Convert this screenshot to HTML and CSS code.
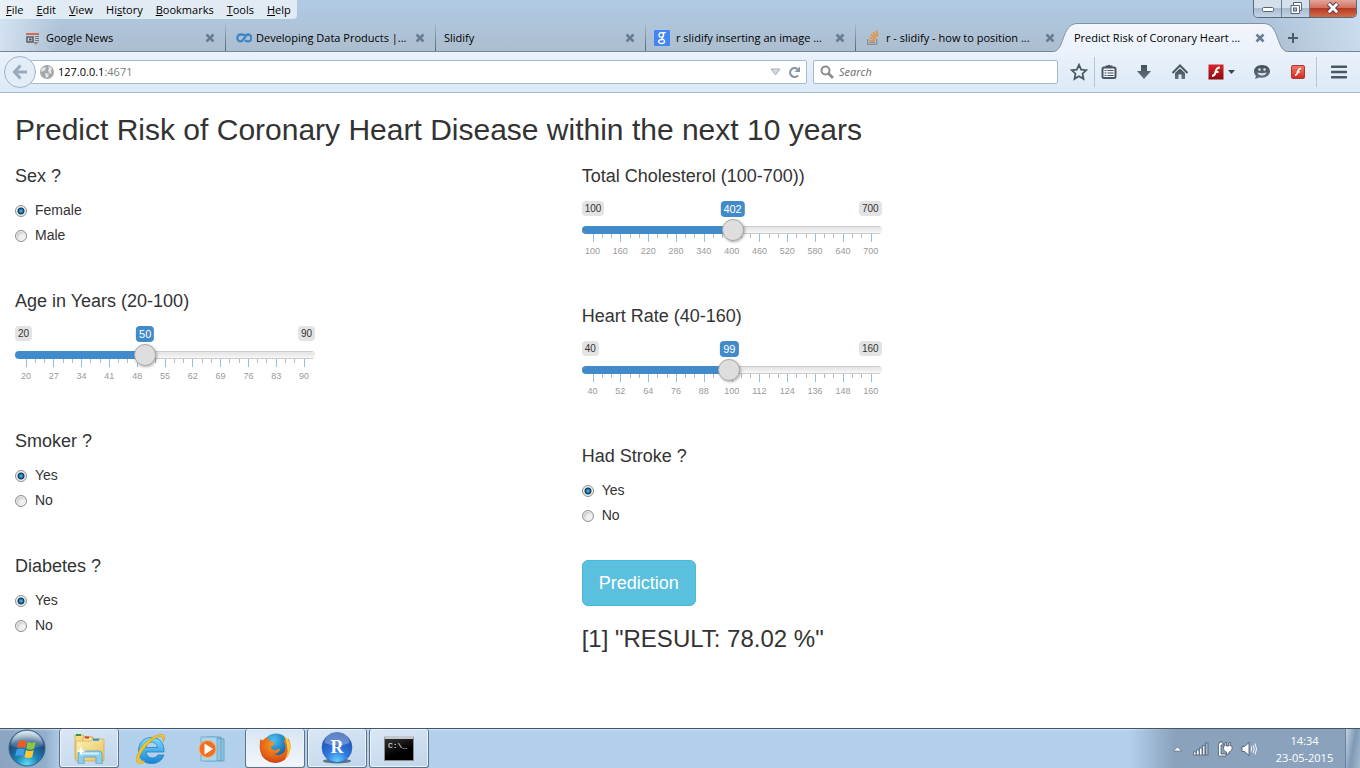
FILE: index.html
```
<!DOCTYPE html>
<html lang="en">
<head>
<meta charset="utf-8">
<meta name="viewport" content="width=device-width, initial-scale=1">
<title>Predict Risk of Coronary Heart Disease</title>
<link rel="stylesheet" href="styles.css">
</head>
<body>
<svg class="defs" aria-hidden="true">
  <defs>
    <symbol id="x" viewBox="0 0 10 10"><path d="M1.5 1.5l7 7M8.5 1.5l-7 7" stroke="#687d92" stroke-width="2.6"/></symbol>
    <symbol id="ticks" viewBox="0 0 278 8" preserveAspectRatio="none" overflow="visible">
      <path d="M9.3 0v4M18.5 0v4M37.1 0v4M46.3 0v4M64.9 0v4M74.1 0v4M92.7 0v4M101.9 0v4M120.5 0v4M129.7 0v4M148.3 0v4M157.5 0v4M176.1 0v4M185.3 0v4M203.9 0v4M213.1 0v4M231.7 0v4M240.9 0v4M259.5 0v4M268.7 0v4" stroke="#b8b8b8"/>
      <path d="M0 0v8M27.8 0v8M55.6 0v8M83.4 0v8M111.2 0v8M139 0v8M166.8 0v8M194.6 0v8M222.4 0v8M250.2 0v8M278 0v8" stroke="#93bfe2"/>
    </symbol>
    <linearGradient id="tabfill" x1="0" y1="0" x2="0" y2="1"><stop offset="0" stop-color="#f3f6fb"/><stop offset="1" stop-color="#eaf2fb"/></linearGradient>
    <linearGradient id="dark" x1="0" y1="0" x2="0" y2="1"><stop offset="0" stop-color="#434e5a"/><stop offset="1" stop-color="#66737f"/></linearGradient>
    <linearGradient id="red" x1="0" y1="0" x2="0" y2="1"><stop offset="0" stop-color="#d8262a"/><stop offset="1" stop-color="#8c0a0d"/></linearGradient>
    <linearGradient id="red2" x1="0" y1="0" x2="0" y2="1"><stop offset="0" stop-color="#f47a6b"/><stop offset="1" stop-color="#cf2a20"/></linearGradient>
    <radialGradient id="orb" cx=".5" cy=".95" r=".9"><stop offset="0" stop-color="#59e0f5"/><stop offset=".35" stop-color="#1d82b8"/><stop offset=".75" stop-color="#1a4a78"/><stop offset="1" stop-color="#8fb4cf"/></radialGradient>
    <linearGradient id="gloss" x1="0" y1="0" x2="0" y2="1"><stop offset="0" stop-color="#fff" stop-opacity=".7"/><stop offset="1" stop-color="#fff" stop-opacity=".08"/></linearGradient>
    <linearGradient id="folder" x1="0" y1="0" x2="1" y2="1"><stop offset="0" stop-color="#fdf3b4"/><stop offset="1" stop-color="#e6bf5c"/></linearGradient>
    <linearGradient id="ieblue" x1="0" y1="0" x2="0" y2="1"><stop offset="0" stop-color="#7fdcfb"/><stop offset="1" stop-color="#1584d4"/></linearGradient>
    <radialGradient id="fox" cx=".5" cy=".3" r=".75"><stop offset="0" stop-color="#f9a01b"/><stop offset=".6" stop-color="#e8641a"/><stop offset="1" stop-color="#c23b17"/></radialGradient>
    <radialGradient id="globe" cx=".4" cy=".25" r=".8"><stop offset="0" stop-color="#4fc3f3"/><stop offset=".6" stop-color="#1879bd"/><stop offset="1" stop-color="#123f7c"/></radialGradient>
    <radialGradient id="rball" cx=".5" cy=".95" r=".95"><stop offset="0" stop-color="#62d0ff"/><stop offset=".4" stop-color="#2e78dd"/><stop offset="1" stop-color="#1c47ab"/></radialGradient>
  </defs>
</svg>

<header class="browser">
  <div class="titlebar">
    <nav class="menubar" aria-label="Menu bar">
      <button><u>F</u>ile</button><button><u>E</u>dit</button><button><u>V</u>iew</button><button>Hi<u>s</u>tory</button><button><u>B</u>ookmarks</button><button><u>T</u>ools</button><button><u>H</u>elp</button>
    </nav>
    <div class="window-buttons">
      <button class="win-min" aria-label="Minimize"><svg width="14" height="16" viewBox="0 0 14 16"><rect x="1.5" y="6.5" width="11" height="4" rx="1" fill="#fff" stroke="#5a6575"/></svg></button>
      <button class="win-max" aria-label="Restore"><svg width="14" height="16" viewBox="0 0 14 16"><path d="M4.500 2.500h8v8h-2v3h-8.500v-8h2.500z" fill="#fff" stroke="#5a6575"/><path d="M4.500 5.500h6v5" fill="none" stroke="#5a6575"/><rect x="4.500" y="8" width="3" height="3" fill="#a6b8cc" stroke="#5a6575"/></svg></button>
      <button class="win-close" aria-label="Close"><svg width="16" height="16" viewBox="0 0 16 16"><path d="M3.500 3.500l9 9M12.500 3.500l-9 9" stroke="#5c3b40" stroke-width="4.600"/><path d="M3.800 3.800l8.400 8.400M12.200 3.800l-8.400 8.400" stroke="#fff" stroke-width="2.800"/></svg></button>
    </div>
  </div>

  <div class="tabs">
    <div class="tab">
      <svg width="16" height="16" viewBox="0 0 16 16"><path d="M0 4h13" stroke="#e0442c" stroke-width="1.500"/><rect x="1" y="7" width="6" height="5" fill="none" stroke="#555" stroke-width="1.400"/><rect x="3" y="8.500" width="2.500" height="2" fill="#555"/><path d="M9 6.500h4M9 8.500h4M9 10.500h4" stroke="#777"/><path d="M8 12h5l-4 3z" fill="#888"/></svg>
      <span class="tab-title">Google News</span><button class="tab-close" aria-label="Close tab"><svg width="10" height="10"><use href="#x"/></svg></button>
    </div>
    <div class="tab">
      <svg width="16" height="16" viewBox="0 0 16 16"><path d="M9.500 5.700C8 4.200 6.500 4.500 4.700 4.500a3.400 3.400 0 0 0 0 6.900c3.500 0 4-6.900 7.300-6.900a3.300 3.300 0 0 1 0 6.900c-1.200 0-2.200-.400-2.900-1.200" fill="none" stroke="#3f86c8" stroke-width="2.300"/></svg>
      <span class="tab-title">Developing Data Products |...</span><button class="tab-close" aria-label="Close tab"><svg width="10" height="10"><use href="#x"/></svg></button>
    </div>
    <div class="tab tab-plain">
      <span class="tab-title">Slidify</span><button class="tab-close" aria-label="Close tab"><svg width="10" height="10"><use href="#x"/></svg></button>
    </div>
    <div class="tab tab-google">
      <svg width="16" height="16" viewBox="0 0 16 16"><rect width="16" height="16" rx="1" fill="#4285f4"/><g fill="none" stroke="#fff" stroke-width="1.300"><ellipse cx="7.300" cy="4.900" rx="2.300" ry="2.300"/><path d="M7.300 2.600h4.500M9.300 3.500q1 2-.300 3.300-2 1.200-.4 2.100c1 .600 2 1.200 2 2.300 0 3-6 3-6 .400 0-1.600 2-2.100 4-2.100"/></g></svg>
      <span class="tab-title">r slidify inserting an image ...</span><button class="tab-close" aria-label="Close tab"><svg width="10" height="10"><use href="#x"/></svg></button>
    </div>
    <div class="tab">
      <svg width="16" height="16" viewBox="0 0 16 16"><path d="M1.700 9v5.300h9V9" fill="none" stroke="#8b8f94" stroke-width="1.300"/><path d="M3.500 12.400h5.500" stroke="#8b8f94" stroke-width="1.300"/><g stroke="#f08a24" stroke-width="1.400"><path d="M3.500 10.400l5.600.500M3.700 7.700l5.600 1.600M4.700 4.700l5 3.200M7 2.200l3.700 4.600M10.300.500l1.600 5.600"/></g></svg>
      <span class="tab-title">r - slidify - how to position ...</span><button class="tab-close" aria-label="Close tab"><svg width="10" height="10"><use href="#x"/></svg></button>
    </div>
    <div class="tab tab-active">
      <div class="tab-shape" aria-hidden="true">
        <svg width="26" height="30" viewBox="0 0 26 30"><path d="M0 28.500C12 28.500 8 1 24 .500h2V30H0z" fill="url(#tabfill)"/><path d="M0 28.500C12 28.500 8 1 24 .500h2" fill="none" stroke="#7d92a9"/></svg>
        <i></i>
        <svg width="26" height="30" viewBox="0 0 26 30"><path d="M26 28.500C14 28.500 18 1 2 .500H0V30h26z" fill="url(#tabfill)"/><path d="M26 28.500C14 28.500 18 1 2 .500H0" fill="none" stroke="#7d92a9"/></svg>
      </div>
      <span class="tab-title">Predict Risk of Coronary Heart ...</span><button class="tab-close" aria-label="Close tab"><svg width="10" height="10"><use href="#x"/></svg></button>
    </div>
    <button class="new-tab" aria-label="New tab"><svg width="12" height="12" viewBox="0 0 12 12"><path d="M6 1v10M1 6h10" stroke="#4a5b6d" stroke-width="2"/></svg></button>
  </div>

  <div class="toolbar">
    <button class="back" aria-label="Back"><svg width="16" height="16" viewBox="0 0 16 16"><path d="M8.500 1.500L2.500 8l6 6.500M3 8h12" fill="none" stroke="#9aaabc" stroke-width="3"/></svg></button>
    <div class="urlbar">
      <svg width="16" height="16" viewBox="0 0 16 16"><circle cx="8" cy="8" r="7" fill="#a3a7aa"/><path d="M3 4l3-1 1 2-2 2-3 1zM9 2l4 2-1 4 1 2-3-1-1-3 1-2zM6 9l4 1-1 3-2 1z" fill="#e4e6e7"/></svg>
      <div class="address"><span>127.0.0.1</span><span class="port">:4671</span></div>
      <button aria-label="Show history"><svg width="11" height="8" viewBox="0 0 11 8"><path d="M1 1h9L5.500 7z" fill="#d5dbe2" stroke="#a5afbb"/></svg></button>
      <button aria-label="Reload"><svg width="13" height="13" viewBox="0 0 13 13"><path d="M10 9.500A4.500 4.500 0 1 1 9.500 3" fill="none" stroke="#8695a5" stroke-width="2.200"/><path d="M12 .500V6H6.500z" fill="#8695a5"/></svg></button>
    </div>
    <label class="search">
      <svg width="14" height="14" viewBox="0 0 14 14"><circle cx="5.500" cy="5.500" r="4" fill="none" stroke="#8d8d8d" stroke-width="2"/><path d="M8.500 8.500l4.500 4.500" stroke="#8d8d8d" stroke-width="2.600"/></svg>
      <input type="text" placeholder="Search" aria-label="Search">
    </label>
    <div class="tools">
      <button class="t-star" aria-label="Bookmark"><svg width="18" height="18" viewBox="0 0 18 18"><path d="M9 1.800l2.200 4.800 5 .600-3.700 3.500 1 5.200L9 13.300l-4.500 2.600 1-5.200L1.800 7.200l5-.600z" fill="none" stroke="#4b5763" stroke-width="1.800"/></svg></button>
      <button class="t-clip" aria-label="Bookmarks list"><svg width="16" height="16" viewBox="0 0 16 16"><path d="M4.500 3V1.500h2Q8 0 9.500 1.500h2V3z" fill="#4b5763"/><rect x="1.500" y="3.500" width="13" height="10.500" rx="1.500" fill="#eef3f9" stroke="#4b5763" stroke-width="2"/><path d="M3.500 6.500h2M6.500 6.500h6M3.500 9h2M6.500 9h6M3.500 11.500h2M6.500 11.500h6" stroke="#4b5763" stroke-width="1.200"/></svg></button>
      <button aria-label="Downloads"><svg width="16" height="16" viewBox="0 0 16 16"><path d="M5 1h6v6h4l-7 8-7-8h4z" fill="url(#dark)"/></svg></button>
      <button aria-label="Home"><svg width="18" height="16" viewBox="0 0 18 16"><path d="M1.500 9L9 1.500 16.500 9" fill="none" stroke="#4b5763" stroke-width="2"/><path d="M4 9L9 4.500 14 9v6h-3.500v-4.500h-3V15H4z" fill="url(#dark)"/></svg></button>
      <button class="t-flash" aria-label="Flash"><svg width="16" height="16" viewBox="0 0 16 16"><rect x=".5" y=".5" width="15" height="15" fill="url(#red)"/><path d="M12 3.500q-3.500 0-4.300 4.200Q7 11.500 4 12M6.500 8h4" fill="none" stroke="#fff" stroke-width="2"/></svg><svg width="7" height="4" viewBox="0 0 7 4"><path d="M0 0h7L3.500 4z" fill="#3b4753"/></svg></button>
      <button aria-label="Chat"><svg width="18" height="16" viewBox="0 0 18 16"><path d="M9 1c4.500 0 8 2.800 8 6.300s-3.500 6.400-8 6.400c-1 0-2-.100-2.800-.300L2 15l1-3C1.700 10.800 1 9.200 1 7.300 1 3.800 4.500 1 9 1z" fill="url(#dark)"/><path d="M4.500 8.500q4.500 1.500 9 0-1 3-4.500 3t-4.500-3z" fill="#dfe9f5"/><circle cx="6.500" cy="5.500" r="1.200" fill="#dfe9f5"/><circle cx="11.500" cy="5.500" r="1.200" fill="#dfe9f5"/></svg></button>
      <button aria-label="Flash block"><svg width="16" height="16" viewBox="0 0 16 16"><rect x="1.500" y="1.500" width="13" height="13" rx="1.500" fill="url(#red2)" stroke="#b3362c"/><path d="M11 4.500q-2.500 0-3.200 3.200Q7.200 11 5 11.300M6.700 8h3" fill="none" stroke="#fff" stroke-width="1.500"/></svg></button>
      <button class="t-menu" aria-label="Open menu"><svg width="16" height="14" viewBox="0 0 16 14"><path d="M1 1.800h14M1 7h14M1 12.200h14" stroke="#4b5763" stroke-width="2.600" stroke-linecap="round"/></svg></button>
    </div>
  </div>
</header>

<main class="page">
  <h2>Predict Risk of Coronary Heart Disease within the next 10 years</h2>
  <div class="row">
    <div class="col">
      <section class="group" role="radiogroup" aria-labelledby="sex">
        <h4 id="sex">Sex ?</h4>
        <div class="radios">
          <label><input type="radio" name="sex" checked>Female</label>
          <label><input type="radio" name="sex">Male</label>
        </div>
      </section>
      <section class="group">
        <h4><label for="age">Age in Years (20-100)</label></h4>
        <div class="slider" style="--p:.4286">
          <div class="bubbles"><span>20</span><span>90</span><output for="age">50</output></div>
          <input type="range" id="age" min="20" max="90" value="50">
          <svg class="ticks" height="8"><use href="#ticks"/></svg>
          <div class="scale"><span>20</span><span>27</span><span>34</span><span>41</span><span>48</span><span>55</span><span>62</span><span>69</span><span>76</span><span>83</span><span>90</span></div>
        </div>
      </section>
      <section class="group" role="radiogroup" aria-labelledby="smoker">
        <h4 id="smoker">Smoker ?</h4>
        <div class="radios">
          <label><input type="radio" name="smoker" checked>Yes</label>
          <label><input type="radio" name="smoker">No</label>
        </div>
      </section>
      <section class="group" role="radiogroup" aria-labelledby="diabetes">
        <h4 id="diabetes">Diabetes ?</h4>
        <div class="radios">
          <label><input type="radio" name="diabetes" checked>Yes</label>
          <label><input type="radio" name="diabetes">No</label>
        </div>
      </section>
    </div>
    <div class="col">
      <section class="group">
        <h4><label for="chol">Total Cholesterol (100-700))</label></h4>
        <div class="slider" style="--p:.5033">
          <div class="bubbles"><span>100</span><span>700</span><output for="chol">402</output></div>
          <input type="range" id="chol" min="100" max="700" value="402">
          <svg class="ticks" height="8"><use href="#ticks"/></svg>
          <div class="scale"><span>100</span><span>160</span><span>220</span><span>280</span><span>340</span><span>400</span><span>460</span><span>520</span><span>580</span><span>640</span><span>700</span></div>
        </div>
      </section>
      <section class="group">
        <h4><label for="rate">Heart Rate (40-160)</label></h4>
        <div class="slider" style="--p:.4917">
          <div class="bubbles"><span>40</span><span>160</span><output for="rate">99</output></div>
          <input type="range" id="rate" min="40" max="160" value="99">
          <svg class="ticks" height="8"><use href="#ticks"/></svg>
          <div class="scale"><span>40</span><span>52</span><span>64</span><span>76</span><span>88</span><span>100</span><span>112</span><span>124</span><span>136</span><span>148</span><span>160</span></div>
        </div>
      </section>
      <section class="group group-last" role="radiogroup" aria-labelledby="stroke">
        <h4 id="stroke">Had Stroke ?</h4>
        <div class="radios">
          <label><input type="radio" name="stroke" checked>Yes</label>
          <label><input type="radio" name="stroke">No</label>
        </div>
      </section>
      <button class="predict">Prediction</button>
      <h3>[1] "RESULT: 78.02 %"</h3>
    </div>
  </div>
</main>

<footer class="taskbar">
  <button class="start" aria-label="Start"><svg width="38" height="38" viewBox="0 0 38 38"><circle cx="19" cy="19" r="18" fill="url(#orb)" stroke="#3c5f80"/><path d="M3 17a16 15 0 0 1 32 0q-16 5-32 0z" fill="url(#gloss)"/><path d="M10.500 12.500q4-2.500 8 0l-1.500 6.800q-4-2-8 0z" fill="#ee5a24"/><path d="M19.800 13q4 2 8-.300l-1.700 7q-4 2-7.800 0z" fill="#8cc63f"/><path d="M8.700 20.500q4-2 8 0l-1.500 6.800q-4-2.300-8 0z" fill="#3fa0e8"/><path d="M18 21q4 2 7.800 0l-1.600 7q-4 2-7.800 0z" fill="#fdc82f"/></svg></button>
  <div class="tasks">
    <button class="task open" aria-label="Explorer"><svg width="32" height="32" viewBox="0 0 32 32"><path d="M2 3h8l2 2h8v22H2z" fill="#f6dc86" stroke="#c9a144" stroke-width=".7"/><path d="M10 5h8l2 2h7v20H10z" fill="#f9e59c" stroke="#c9a144" stroke-width=".7"/><path d="M3 9h15l2-2h11v22H3z" fill="url(#folder)" stroke="#cfa94b" stroke-width=".7"/><path d="M3 3h5" stroke="#2d9a3a" stroke-width="2"/><path d="M12 5.500h4" stroke="#d83a28" stroke-width="2"/><path d="M20 7.800h6" stroke="#2f94d8" stroke-width="2"/><path d="M5 32V22q0-3 3-3h18q3 0 3 3v10h-6v-7H11v7z" fill="#8ecdec" stroke="#5c9fc8" stroke-width=".8"/><path d="M8 21.500h18" stroke="#d2effb" stroke-width="2"/><path d="M8 14l1.300 4L13 19l-3.700 1L8 24l-1.300-4L3 19l3.700-1z" fill="#fff"/></svg></button>
    <button class="task" aria-label="Internet Explorer"><svg width="32" height="32" viewBox="0 0 32 32"><path d="M29 19H11q1 6 6.500 6 4 0 5.500-3h6q-3 8.500-12.500 8.500C8 30.500 3.500 25 3.500 17.500S8.500 4.500 16.500 4.500C25 4.500 29.500 10.500 29 19zM11 14.500h11.500q-1-5.500-5.800-5.500T11 14.500z" fill="url(#ieblue)" stroke="#1b78b8" stroke-width=".7"/><path d="M6.500 30.500Q-1 31 2 22.500 6 11 18 4q10-5 11.500-1 .700 2.500-1.200 6Q28.500 4 26 3.500 20 3.500 12 12q-8 9-8 14 .300 3 5.500 1.500Q8.500 30.500 6.500 30.500z" fill="#f4c52c" stroke="#c9961c" stroke-width=".5"/></svg></button>
    <button class="task" aria-label="Media Player"><svg width="30" height="30" viewBox="0 0 30 30"><path d="M12 3l14 2v22l-12-1zM8 3h15v24H8z" fill="#8fc3df" stroke="#6aa3c6"/><path d="M3 3h16v24H3z" fill="#a9d6ec" stroke="#75afd0"/><circle cx="9.500" cy="15" r="8.500" fill="#f0711f" stroke="#f9b27d"/><path d="M6.500 9.500v11l8.500-5.500z" fill="#fff"/></svg></button>
    <button class="task open bright" aria-label="Firefox"><svg width="32" height="32" viewBox="0 0 32 32"><circle cx="17" cy="15" r="13.500" fill="url(#globe)"/><path d="M1.500 7q1 1.500 2.500 1 2-2.500 6-3-1 1.500-.5 3.500 4 .500 6 2.500-.5 2.500-4 3.500.5 2.500 3 3.500 3 .700 5-1.200 1.500-.500 1.700 1-2 4-6 4.200 6 3 10-2 3-5-.7-12Q29 10 29.500 6.500 32.500 12 31 18.500 28 30.500 16 31 3.500 30 1 18.500.300 12 1.500 7z" fill="url(#fox)"/><path d="M24 3q8 5 7.500 13-.5 7-6 11.500 4.500-7 2.500-13Q27 7 24 3z" fill="#f8c63d"/></svg></button>
    <button class="task open" aria-label="RStudio"><svg width="32" height="32" viewBox="0 0 32 32"><ellipse cx="16" cy="29" rx="14" ry="2.500" fill="#5c7590"/><circle cx="16" cy="15.500" r="15" fill="url(#rball)" stroke="#2957a8" stroke-width=".6"/><path d="M3.500 11a12.500 10.500 0 0 1 25 0q-12.500 5-25 0z" fill="#fff" opacity=".3"/><text x="16" y="21" text-anchor="middle" class="r-mark">R</text></svg></button>
    <button class="task open" aria-label="Command Prompt"><span class="cmd">C:\_</span></button>
  </div>
  <div class="tray">
    <button aria-label="Show hidden icons"><svg width="9" height="6" viewBox="0 0 9 6"><path d="M.5 5L4.500 1l4 4z" fill="#fff" stroke="#53677d" stroke-width=".6"/></svg></button>
    <button aria-label="Network"><svg width="16" height="14" viewBox="0 0 16 14"><g fill="#fff" stroke="#50657c" stroke-width=".8"><rect x=".5" y="10" width="2.500" height="3"/><rect x="3.500" y="8" width="2.500" height="5"/><rect x="6.500" y="6" width="2.500" height="7"/><rect x="9.500" y="3.500" width="2.500" height="9.500" fill="#dce5ee"/><rect x="12.500" y="1" width="2.500" height="12" fill="#a9b9c9"/></g></svg></button>
    <button aria-label="Power"><svg width="16" height="16" viewBox="0 0 16 16"><path d="M1.500 3.500V14q0 1 1 1H9V13H4V4h2V2H5V.700H3V2H2.500q-1 0-1 1.500z" fill="#fff" stroke="#3e4f61" stroke-width=".7"/><path d="M8 1.500h1.500V5h2.500V1.500h1.500V5H15v2.500q0 3-3 3.500v2h-2.500v-2q-3-.500-3-3.500V5H8z" fill="#fff" stroke="#3e4f61" stroke-width=".7"/></svg></button>
    <button aria-label="Volume"><svg width="16" height="16" viewBox="0 0 16 16"><path d="M1 5.500h2.500L8 1.500v13L3.500 10.500H1z" fill="#fff" stroke="#3e4f61" stroke-width=".8"/><path d="M10 5.500q1.500 2.500 0 5M12 4q2.500 4 0 8M14 2.500q3 5.500 0 11" fill="none" stroke="#f4f8fc"/></svg></button>
    <time class="clock"><span>14:34</span><span>23-05-2015</span></time>
    <button class="show-desktop" aria-label="Show desktop"></button>
  </div>
</footer>
</body>
</html>
```
FILE: styles.css
```
* { box-sizing: border-box; }
body {
  margin: 0;
  min-height: 100vh;
  display: flex;
  flex-direction: column;
  background: #fff;
  color: #333;
  font-family: "Liberation Sans", Arial, sans-serif;
}
button { border: 0; padding: 0; background: none; color: inherit; font: inherit; }
svg { display: block; flex: none; }
.defs { position: absolute; width: 0; height: 0; }

/* browser chrome */
.browser {
  font: 11px/16px "Open Sans", "Noto Sans", sans-serif;
  color: #000;
  background:
    linear-gradient(90deg, rgba(215, 229, 243, .9), rgba(215, 229, 243, 0) 60px),
    linear-gradient(270deg, rgba(205, 222, 240, .9), rgba(205, 222, 240, 0) 90px),
    linear-gradient(#afcbe4, #adbdce 52px);
}
.titlebar { display: flex; justify-content: space-between; align-items: flex-start; height: 22px; }
.menubar {
  display: flex;
  gap: 13px;
  padding: 2px 6px 1px;
  background: rgba(240, 245, 250, .75);
  border-radius: 0 0 4px 0;
}
.window-buttons {
  display: flex;
  height: 18px;
  margin-right: 3px;
  border: 1px solid #59697c;
  border-top: 0;
  border-radius: 0 0 5px 5px;
  overflow: hidden;
}
.window-buttons button { display: flex; align-items: center; justify-content: center; padding-bottom: 1px; }
.win-min, .win-max { width: 28px; border-right: 1px solid #6d7d90; background: linear-gradient(#d3dfeb 50%, #a9bccf 50%, #c3d4e5); }
.win-min svg { margin-top: 2px; }
.win-close { width: 46px; background: linear-gradient(#e3a69b, #cf6a58 50%, #b93a22 50%, #cf6c4c); }

.tabs { display: flex; height: 30px; padding-left: 16px; border-bottom: 1px solid #71869c; }
.tab {
  position: relative;
  display: flex;
  align-items: center;
  flex: 0 1 210px;
  min-width: 0;
  gap: 4px;
  padding: 2px 10px 0 10px;
  border-right: 1px solid;
  border-image: linear-gradient(rgba(80, 98, 118, 0), #506276) 1;
}
.tab-plain, .tab-google { padding-left: 8px; }
.tab-google { gap: 6px; }
.tab-title { flex: 1; min-width: 0; overflow: hidden; white-space: nowrap; }
.tab:nth-child(5) { border: 0; padding-right: 11px; }
.tab-active { border: 0; padding-left: 8px; padding-right: 11px; z-index: 1; }
.tab-active > :not(.tab-shape) { position: relative; }
.tab-shape { position: absolute; inset: 1px -12px -1px -13px; display: flex; }
.tab-shape i { flex: 1; border-top: 1px solid #7d92a9; background: linear-gradient(#f3f6fb, #eaf2fb); }
.new-tab { width: 34px; padding: 2px 0 0 11px; }

.toolbar {
  display: flex;
  align-items: center;
  height: 41px;
  padding-left: 4px;
  background: linear-gradient(#eaf2fb, #dce9f7);
  border-bottom: 1px solid #a2bdd4;
}
.back {
  position: relative;
  z-index: 1;
  display: flex;
  align-items: center;
  justify-content: center;
  width: 32px;
  height: 32px;
  border: 1px solid #a0b4c9;
  border-radius: 50%;
  background: #e3edf8;
}
.urlbar, .search {
  display: flex;
  align-items: center;
  height: 24px;
  background: #fff;
  border: 1px solid #a7bace;
  border-radius: 2px;
}
.urlbar { flex: 1; min-width: 0; gap: 7px; margin-left: -6px; padding: 0 5px 0 8px; }
.address { flex: 1; margin-left: -4px; }
.port { color: #7c7c7c; }
.search { flex: 0 1 245px; min-width: 0; margin: 0 5px 0 6px; gap: 5px; padding: 0 6px; }
.search input { flex: 1; min-width: 0; border: 0; padding: 0; background: none; font: inherit; }
.search input::placeholder { color: #6b6b6b; font-style: italic; opacity: 1; }
.tools { display: flex; height: 30px; }
.tools button { display: flex; align-items: center; justify-content: center; width: 36px; }
.tools .t-star { width: 32px; border-right: 1px solid #b5c6d8; }
.tools .t-clip { width: 31px; padding-right: 4px; }
.tools .t-flash { width: 46px; gap: 4px; }
.tools .t-menu { width: 44px; border-left: 1px solid #b5c6d8; }

/* page */
.page { flex: 1; padding: 20px 15px; }
h2, h3, h4 { margin: 0; font-weight: 400; }
h2 { font-size: 30px; line-height: 33px; margin-bottom: 20px; }
h3 { font-size: 24px; line-height: 26px; }
h4 { font-size: 18px; line-height: 20px; }
.row { display: flex; margin: 0 -15px; }
.col { flex: 0 0 41.6667%; min-width: 0; padding: 0 15px; }
.group { margin-bottom: 46px; }
.group-last { margin-bottom: 35px; }
.radios { display: grid; gap: 5px; justify-items: start; margin-top: 14px; }
.radios label { display: flex; align-items: center; gap: 8px; font-size: 14px; line-height: 20px; }
.radios input {
  appearance: none;
  width: 12px;
  height: 12px;
  margin: 2px 0 0;
  border: 1px solid #8e8f8f;
  border-radius: 50%;
  background: radial-gradient(circle at 65% 65%, #f0f0f0 30%, #c9cdd1 60%);
  box-shadow: inset 0 0 0 1px #f2f2f2;
}
.radios input:checked { background: radial-gradient(circle at 50% 50%, #56c8ee 0, #1c6c9e 2px, #0d3350 3px, #e6e9eb 4px); }

.slider { max-width: 300px; margin-top: 15px; padding-bottom: 4px; }
.bubbles { position: relative; display: flex; justify-content: space-between; font-size: 10px; line-height: 15px; }
.bubbles span, .bubbles output { padding: 0 3px; border-radius: 4px; }
.bubbles span { background: #e3e3e3; }
.bubbles output {
  position: absolute;
  left: calc(11px + (100% - 22px) * var(--p));
  transform: translateX(-50%);
  font-size: 11px;
  line-height: 16px;
  background: #428bca;
  color: #fff;
}
.slider input {
  appearance: none;
  display: block;
  position: relative;
  width: 100%;
  height: 22px;
  margin: 3px 0 0;
  background: none;
}
.slider input::-webkit-slider-runnable-track {
  height: 8px;
  border-radius: 8px;
  background:
    linear-gradient(#428bca, #428bca) 0 0 / calc(11px + (100% - 22px) * var(--p)) 100% no-repeat,
    linear-gradient(#dedede, #fff);
  box-shadow: inset 0 0 0 1px #ccc;
}
.slider input::-webkit-slider-runnable-track {
  box-shadow: none;
  background:
    linear-gradient(#428bca, #428bca) 0 0 / calc(11px + (100% - 22px) * var(--p)) 100% no-repeat,
    linear-gradient(#ccc 1px, #e4e4e4 1px, #f6f6f6 7px, #ccc 7px);
}
.slider input::-webkit-slider-thumb {
  appearance: none;
  width: 22px;
  height: 22px;
  margin-top: -7px;
  border: 1px solid #aaa;
  border-radius: 50%;
  background: #dedede;
  box-shadow: 1px 1px 3px rgba(0, 0, 0, .3);
}
.ticks { width: calc(100% - 22px); height: 8px; margin: -7px 11px 0; overflow: visible; }
.ticks use { shape-rendering: crispEdges; }
.scale {
  display: grid;
  grid-template-columns: repeat(11, 1fr);
  margin: 4px -3px 0;
  font-size: 9px;
  line-height: 10px;
  text-align: center;
  color: #999;
}
.predict {
  display: block;
  margin-bottom: 20px;
  padding: 10px 16px;
  border: 1px solid #46b8da;
  border-radius: 6px;
  background: #5bc0de;
  color: #fff;
  font-size: 18px;
  line-height: 24px;
}

/* taskbar */
.taskbar {
  display: flex;
  height: 40px;
  border-top: 1px solid #41566c;
  background:
    linear-gradient(rgba(255, 255, 255, .5), rgba(255, 255, 255, 0) 2px),
    linear-gradient(90deg, #8aa4c1, #93aeca 45px, #b2cfec 62px);
}
.start { display: flex; justify-content: center; width: 53px; margin-right: 6px; }
.tasks { display: flex; gap: 2px; }
.task { display: flex; align-items: center; justify-content: center; width: 60px; }
.open {
  border: 1px solid #5f7489;
  border-top: 0;
  border-radius: 3px;
  background: linear-gradient(160deg, #dbe8f5, #bfd5eb);
  box-shadow: inset 0 0 0 1px #e9f2fa;
}
.bright { background: linear-gradient(#d7e6f4, #f2f6fa); }
.r-mark { font: bold 18px "Liberation Serif", serif; fill: #fff; }
.cmd {
  width: 30px;
  height: 25px;
  border: 1px solid #8b8b8b;
  border-top: 3px solid #c4c8cc;
  background: linear-gradient(160deg, #333, #000 60%);
  color: #fff;
  font: 8px/14px "Liberation Mono", monospace;
  text-align: left;
  padding-left: 3px;
}
.tray {
  display: flex;
  align-items: center;
  margin-left: auto;
  padding-left: 35px;
  background: linear-gradient(90deg, rgba(134, 160, 187, 0), #8aa2bc 45px);
  color: #fff;
}
.tray button { display: flex; align-items: center; justify-content: center; width: 24px; }
.clock {
  display: flex;
  flex-direction: column;
  width: 84px;
  padding-left: 3px;
  font: 11px/17px "Open Sans", "Noto Sans", sans-serif;
  text-align: center;
}
.tray .show-desktop {
  width: 15px;
  align-self: stretch;
  border: 1px solid #6b839d;
  border-width: 0 0 0 1px;
  background: linear-gradient(100deg, #c4d4e4, #7f99b5 50%, #a6bace);
}
```
